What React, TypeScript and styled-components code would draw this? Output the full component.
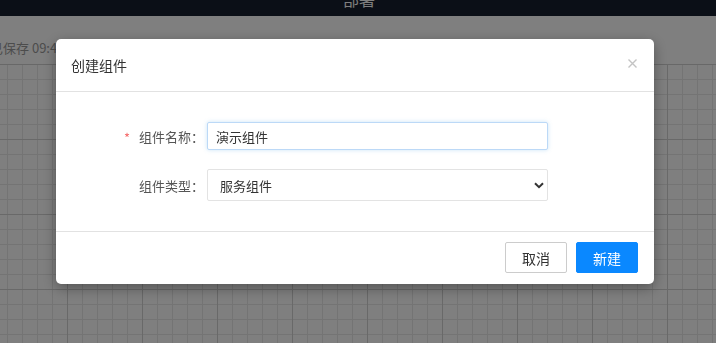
import React from "react";
import styled, { createGlobalStyle } from "styled-components";

const GlobalStyle = createGlobalStyle`
  html, body { margin: 0; padding: 0; height: 100%; overflow: hidden; }
  body { font-family: "Noto Sans CJK SC", "Noto Sans", sans-serif; background: #fff; }
  #root { height: 100%; }
  * { box-sizing: border-box; }
`;

const Page = styled.div`
  display: flex;
  flex-direction: column;
  height: 100vh;
  background: #ffffff;
`;

const TopBar = styled.div`
  height: 16px;
  flex: 0 0 16px;
  background: #161e2e;
  overflow: hidden;
  display: flex;
  justify-content: center;
`;

const TopTitle = styled.span`
  color: #ffffff;
  font-size: 16px;
  line-height: 16px;
  margin-top: -9px;
  margin-left: 2px;
`;

const SubBar = styled.div`
  height: 49px;
  flex: 0 0 49px;
  display: flex;
  align-items: center;
  border-bottom: 1px solid #d0d0d0;
  overflow: hidden;
`;

const SaveText = styled.span`
  color: #999999;
  font-size: 13px;
  margin-left: -10px;
  margin-top: 14px;
  white-space: nowrap;
`;

const Canvas = styled.div`
  flex: 1;
  background-color: #ffffff;
  background-image:
    linear-gradient(to right, #d2d2d2 1px, transparent 1px),
    linear-gradient(to bottom, #d2d2d2 1px, transparent 1px),
    linear-gradient(to right, #e8e8e8 1px, transparent 1px),
    linear-gradient(to bottom, #e8e8e8 1px, transparent 1px);
  background-size: 75px 75px, 75px 75px, 15px 15px, 15px 15px;
  background-position: 67px 74px, 0 74px, 7px 14px, 0 14px;
`;

const Overlay = styled.div`
  position: fixed;
  inset: 0;
  background: rgba(0, 0, 0, 0.5);
  display: flex;
  align-items: flex-start;
  padding: 39px 0 0 56px;
`;

const Modal = styled.div`
  width: 598px;
  background: #ffffff;
  border-radius: 5px;
  box-shadow: 0 4px 14px rgba(0, 0, 0, 0.35);
  display: flex;
  flex-direction: column;
`;

const ModalHeader = styled.div`
  height: 53px;
  display: flex;
  align-items: center;
  justify-content: space-between;
  padding: 0 17px 1px 15px;
  border-bottom: 1px solid #e2e2e2;
`;

const Title = styled.span`
  font-size: 14px;
  color: #333333;
`;

const CloseButton = styled.button`
  border: none;
  background: transparent;
  padding: 0;
  width: 10px;
  height: 10px;
  display: flex;
  align-items: center;
  justify-content: center;
  cursor: pointer;
  margin-top: -2px;
`;

const ModalBody = styled.div`
  display: flex;
  flex-direction: column;
  gap: 19px;
  padding: 30px 0 30px 0;
`;

const FormRow = styled.div`
  display: flex;
  align-items: center;
`;

const Label = styled.label`
  width: 151px;
  flex: 0 0 151px;
  padding-right: 3px;
  display: flex;
  justify-content: flex-end;
  align-items: center;
  font-size: 13px;
  color: #555555;
`;

const Required = styled.span`
  color: #f56c6c;
  font-size: 13px;
  margin-right: 9px;
  margin-top: 3px;
`;

const LabelText = styled.span`
  width: 65px;
  white-space: nowrap;
`;

const TextInput = styled.input`
  width: 341px;
  height: 28px;
  padding: 0 8px;
  border: 1px solid #bcd9f7;
  border-radius: 2px;
  box-shadow: 0 0 4px rgba(102, 175, 233, 0.35);
  font-family: inherit;
  font-size: 13px;
  color: #333333;
  outline: none;
  caret-color: #000;
`;

const SelectWrap = styled.div`
  position: relative;
  width: 341px;
  height: 32px;
`;

const Select = styled.select`
  appearance: none;
  width: 100%;
  height: 100%;
  padding: 0 30px 0 12px;
  border: 1px solid #e3e3e3;
  border-radius: 2px;
  background: #ffffff;
  font-family: inherit;
  font-size: 13px;
  color: #333333;
  outline: none;
`;

const Chevron = styled.svg`
  position: absolute;
  right: 4px;
  top: 13px;
  pointer-events: none;
`;

const ModalFooter = styled.div`
  display: flex;
  justify-content: flex-end;
  gap: 9px;
  padding: 10px 16px 11px 0;
  border-top: 1px solid #e2e2e2;
`;

const Button = styled.button<{ $primary?: boolean }>`
  width: 62px;
  height: 31px;
  border-radius: 2px;
  font-family: inherit;
  font-size: 14px;
  cursor: pointer;
  border: 1px solid ${(p) => (p.$primary ? "#0a88ff" : "#cccccc")};
  background: ${(p) => (p.$primary ? "#0a88ff" : "#ffffff")};
  color: ${(p) => (p.$primary ? "#ffffff" : "#333333")};
`;

export default function App() {
  return (
    <>
      <GlobalStyle />
      <Page>
        <TopBar>
          <TopTitle>部署</TopTitle>
        </TopBar>
        <SubBar>
          <SaveText>已保存 09:42</SaveText>
        </SubBar>
        <Canvas />
      </Page>
      <Overlay>
        <Modal>
          <ModalHeader>
            <Title>创建组件</Title>
            <CloseButton aria-label="关闭">
              <svg width="9" height="9" viewBox="0 0 9 9">
                <path d="M0.5 0.5 L8.5 8.5 M8.5 0.5 L0.5 8.5" stroke="#c4c4c4" strokeWidth="1.4" />
              </svg>
            </CloseButton>
          </ModalHeader>
          <ModalBody>
            <FormRow>
              <Label>
                <Required>*</Required>
                <LabelText>组件名称：</LabelText>
              </Label>
              <TextInput defaultValue="演示组件" autoFocus />
            </FormRow>
            <FormRow>
              <Label>
                <LabelText>组件类型：</LabelText>
              </Label>
              <SelectWrap>
                <Select defaultValue="service">
                  <option value="service">服务组件</option>
                  <option value="ui">界面组件</option>
                </Select>
                <Chevron width="10" height="7" viewBox="0 0 10 7">
                  <path d="M1 1.2 L5 5.2 L9 1.2" fill="none" stroke="#333" strokeWidth="2" />
                </Chevron>
              </SelectWrap>
            </FormRow>
          </ModalBody>
          <ModalFooter>
            <Button>取消</Button>
            <Button $primary>新建</Button>
          </ModalFooter>
        </Modal>
      </Overlay>
    </>
  );
}
